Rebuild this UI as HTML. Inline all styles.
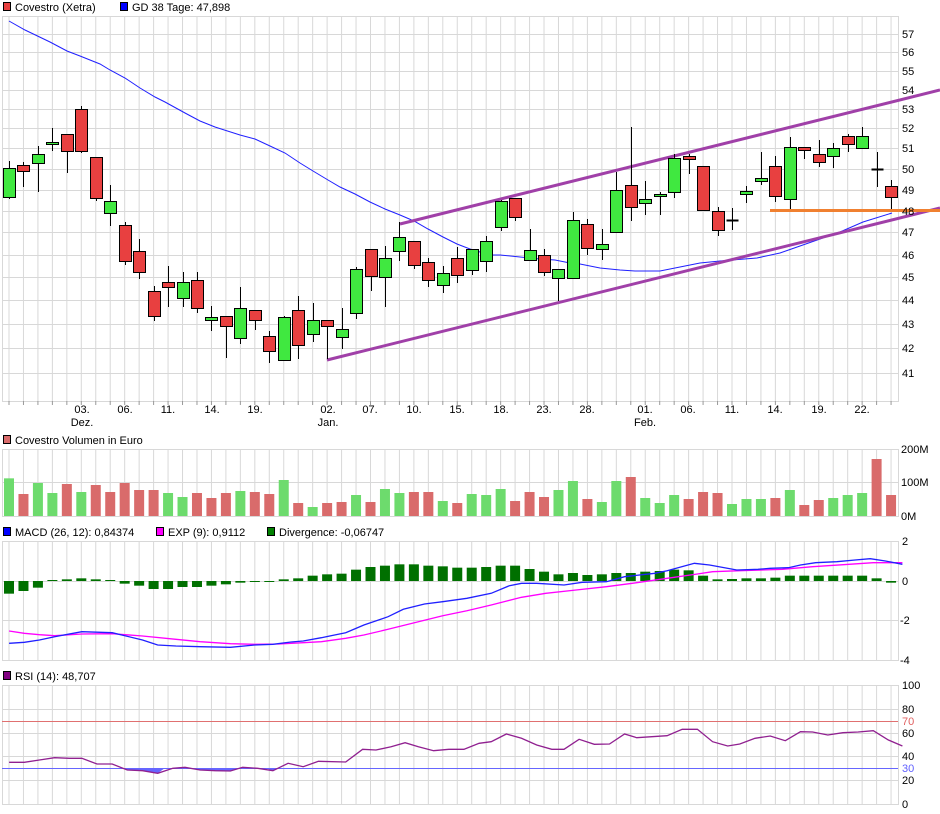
<!DOCTYPE html>
<html><head><meta charset="utf-8"><style>
body{margin:0;background:#fff;width:940px;height:814px;overflow:hidden;font-family:"Liberation Sans",sans-serif}
svg{position:absolute;left:0;top:0}
</style></head><body>
<svg id="s" width="940" height="814" xmlns="http://www.w3.org/2000/svg" font-family="Liberation Sans, sans-serif" font-size="11" fill="#000">
<g id="grid"></g>
<g id="draw"></g>
<!-- legends -->
<rect x="3.5" y="2.5" width="7" height="8" fill="#e84040" stroke="#000"/>
<text x="15" y="11">Covestro (Xetra)</text>
<rect x="120.5" y="2.5" width="7" height="8" fill="#0000ff" stroke="#000"/>
<text x="132" y="11">GD 38 Tage: 47,898</text>
<rect x="3.5" y="435.5" width="7" height="8" fill="#d96b6b" stroke="#000"/>
<text x="15" y="444">Covestro Volumen in Euro</text>
<rect x="3.5" y="527.5" width="7" height="8" fill="#0000ff" stroke="#000"/>
<text x="15" y="536">MACD (26, 12): 0,84374</text>
<rect x="156.5" y="527.5" width="7" height="8" fill="#ff00ff" stroke="#000"/>
<text x="168" y="536">EXP (9): 0,9112</text>
<rect x="267.5" y="527.5" width="7" height="8" fill="#008000" stroke="#000"/>
<text x="279" y="536">Divergence: -0,06747</text>
<rect x="3.5" y="671.5" width="7" height="8" fill="#800080" stroke="#000"/>
<text x="15" y="680">RSI (14): 48,707</text>
<g font-size="11">
<text x="902" y="38">57</text><text x="902" y="56">56</text><text x="902" y="75">55</text><text x="902" y="94">54</text><text x="902" y="113">53</text><text x="902" y="132">52</text><text x="902" y="152">51</text><text x="902" y="173">50</text><text x="902" y="194">49</text><text x="902" y="215">48</text><text x="902" y="236">47</text><text x="902" y="259">46</text><text x="902" y="281">45</text><text x="902" y="304">44</text><text x="902" y="328">43</text><text x="902" y="352">42</text><text x="902" y="377">41</text>
<text x="901" y="453">200M</text><text x="901" y="486">100M</text><text x="901" y="520">0M</text>
<text x="902" y="545">2</text><text x="902" y="585">0</text><text x="900" y="624">-2</text><text x="900" y="664">-4</text>
<text x="902" y="689">100</text><text x="902" y="713">80</text><text x="902" y="725" fill="#e06060">70</text><text x="902" y="737">60</text><text x="902" y="760">40</text><text x="902" y="772" fill="#6060ff">30</text><text x="902" y="784">20</text><text x="902" y="808">0</text>
</g>
<g text-anchor="middle">
<text x="82" y="413">03.</text><text x="125" y="413">06.</text><text x="168" y="413">11.</text><text x="212" y="413">14.</text><text x="255" y="413">19.</text><text x="328" y="413">02.</text><text x="370" y="413">07.</text><text x="414" y="413">10.</text><text x="457" y="413">15.</text><text x="501" y="413">18.</text><text x="544" y="413">23.</text><text x="587" y="413">28.</text><text x="645" y="413">01.</text><text x="688" y="413">06.</text><text x="732" y="413">11.</text><text x="775" y="413">14.</text><text x="819" y="413">19.</text><text x="862" y="413">22.</text>
<text x="82" y="426">Dez.</text><text x="328" y="426">Jan.</text><text x="645" y="426">Feb.</text>
</g>
</svg>
<script>
var NS="http://www.w3.org/2000/svg";
function el(p,t,a){var e=document.createElementNS(NS,t);for(var k in a)e.setAttribute(k,a[k]);p.appendChild(e);return e;}
var G=document.getElementById('grid'),D=document.getElementById('draw');
function X(i){return 9+i*14.46;}
var gc="#d8d8d8";
// panels
var panels=[[16,401],[449,516],[541,660],[685,804]];
panels.forEach(function(p){
 for(var i=0;i<62;i++)el(G,'line',{x1:X(i),x2:X(i),y1:p[0],y2:p[1],stroke:gc});
 el(G,'rect',{x:2.5,y:p[0]+.5,width:896,height:p[1]-p[0],fill:'none',stroke:gc});
});
for(var i=0;i<62;i++)el(G,'line',{x1:X(i),x2:X(i),y1:401,y2:405,stroke:'#999'});
function PY(p){return 34+1028.6*(Math.log(57)-Math.log(p));}
for(var p=41;p<=57;p++){var y=Math.round(PY(p))+.5;el(G,'line',{x1:2,x2:898,y1:y,y2:y,stroke:gc});}
[482.5].forEach(function(y){el(G,'line',{x1:2,x2:898,y1:y,y2:y,stroke:gc});});
[581.5,620.5].forEach(function(y){el(G,'line',{x1:2,x2:898,y1:y,y2:y,stroke:gc});});
[709.5,733.5,756.5,780.5].forEach(function(y){el(G,'line',{x1:2,x2:898,y1:y,y2:y,stroke:gc});});
el(G,'line',{x1:2,x2:898,y1:721.5,y2:721.5,stroke:'#e07070'});
el(G,'line',{x1:2,x2:898,y1:768.5,y2:768.5,stroke:'#6666ff'});
// GD38
var gd=[[9,21],[25,30],[50,42],[67,51],[80,56],[100,64],[110,70],[125,78],[140,88],[155,97],[165,102],[185,113],[200,121],[215,127],[240,135],[255,139],[270,146],[285,153],[300,163],[313,171],[328,180],[340,187],[355,194],[370,202],[385,209],[400,215],[414,221],[428,229],[443,237],[457,244],[470,249],[490,255],[500,255],[520,257],[540,259],[555,260],[570,263],[580,264],[600,268],[620,270],[635,271],[660,271],[680,267],[700,263],[720,261],[732,260],[757,258],[780,254],[800,248],[820,242],[840,236],[863,219],[892,213]];
gd=[[9,21],[25,30],[50,42],[67,51],[80,56],[100,64],[110,70],[125,78],[140,88],[155,97],[165,102],[185,113],[200,121],[215,127],[240,135],[255,139],[270,146],[285,153],[300,163],[313,171],[328,180],[340,187],[355,194],[370,202],[385,209],[400,215],[414,221],[428,229],[443,237],[457,244],[470,249],[490,255],[500,255],[520,257],[540,259],[555,260],[570,263],[580,264],[600,268],[620,270],[635,271],[660,271],[680,267],[700,263],[720,261],[732,260],[757,258],[780,253],[800,246],[820,239],[840,232],[863,222],[892,213]];
el(D,'polyline',{points:gd.join(' '),fill:'none',stroke:'#2020ff','stroke-width':1});
// trend lines
el(D,'line',{x1:400,y1:224,x2:940,y2:90,stroke:'#a040a8','stroke-width':3});
el(D,'line',{x1:327,y1:360,x2:940,y2:208,stroke:'#a040a8','stroke-width':3});
// candles [bt,bb,wt,wb,g]
var c=[[168,197,161,199,1],[165,171,162,187,0],[154,163,146,192,1],[142,144,128,151,1],[134,151,134,173,0],[109,151,106,153,0],[157,198,157,201,0],[201,213,185,226,1],[225,261,222,265,0],[251,272,239,279,0],[291,316,286,321,0],[282,287,266,307,0],[282,298,272,307,1],[280,308,272,313,0],[317,320,306,331,1],[316,326,316,358,0],[308,338,287,344,1],[310,320,310,330,0],[336,351,331,363,0],[317,360,316,360,1],[310,345,296,359,0],[320,334,303,342,1],[320,326,320,359,0],[329,337,308,349,1],[269,313,267,319,1],[249,276,249,291,0],[258,277,246,307,1],[237,251,222,261,1],[241,265,241,269,0],[262,280,258,287,0],[273,285,266,293,1],[258,275,247,283,0],[249,270,249,275,1],[241,261,236,272,1],[201,227,200,231,1],[198,217,198,221,0],[250,260,229,261,1],[255,272,249,276,0],[269,278,269,301,1],[220,278,212,278,1],[224,248,219,255,0],[244,249,229,260,1],[190,232,172,232,1],[185,207,127,221,0],[199,203,181,215,1],[194,196,192,215,1],[158,192,154,198,1],[156,159,154,174,0],[166,210,166,210,0],[211,230,207,236,0],[220,220,208,230,2],[191,194,186,203,1],[178,181,152,185,1],[166,196,156,202,0],[147,199,137,209,1],[147,150,147,159,0],[154,162,140,167,0],[148,156,143,168,1],[136,144,134,152,0],[136,148,127,148,1],[169,169,152,187,2],[186,197,180,209,0]];
c.forEach(function(k,i){var x=Math.round(X(i))+.5;
 el(D,'line',{x1:x,x2:x,y1:k[2],y2:k[3],stroke:'#000'});
 if(k[4]==2){el(D,'line',{x1:x-6,x2:x+6,y1:k[0]+.5,y2:k[0]+.5,stroke:'#000','stroke-width':2});}
 else el(D,'rect',{x:x-6,y:k[0]+.5,width:12,height:Math.max(2,k[1]-k[0]),fill:k[4]?'#40e840':'#e84040',stroke:'#000'});
});
el(D,'line',{x1:770,y1:210.5,x2:940,y2:210.5,stroke:'#f08030','stroke-width':3});
// volume
var v=[[145,1],[192,0],[159,1],[189,1],[162,0],[186,1],[165,0],[186,0],[159,0],[180,0],[180,0],[189,1],[201,1],[189,0],[204,0],[189,0],[183,1],[186,0],[192,0],[150,1],[219,0],[231,1],[219,0],[216,0],[195,1],[216,0],[177,1],[189,1],[186,0],[186,0],[213,1],[219,0],[192,1],[195,1],[177,1],[213,0],[186,0],[201,0],[180,1],[153,1],[207,0],[216,1],[153,1],[141,0],[204,1],[219,1],[195,1],[207,0],[186,0],[189,0],[222,1],[207,1],[207,1],[204,0],[180,1],[225,0],[210,0],[204,1],[195,1],[189,1],[87,0],[195,0]];
v.forEach(function(b,i){var t=430+b[0]/3;el(D,'rect',{x:X(i)-5,y:t,width:10,height:516-t,fill:b[1]?'#6ddb6d':'#d96b6b'});});
// divergence
var dv=[-38,-30,-20,3,5,8,5,3,-8,-14,-24,-24,-18,-18,-14,-10,-5,-2,-2,5,8,16,20,22,34,42,46,50,50,46,44,40,40,42,46,46,36,28,20,24,18,20,24,24,28,30,34,32,16,5,6,8,8,10,16,16,16,16,16,16,8,-5];
dv.forEach(function(d,i){var h=d/3;el(D,'rect',{x:X(i)-5,y:h>0?581-h:581,width:10,height:Math.max(1,Math.abs(h)),fill:'#007000'});});
function cv(a){return a.map(function(p){return (p[0]/1.649).toFixed(1)+','+(430+p[1]/3).toFixed(1);}).join(' ');}
var ex=[[15,603],[40,610],[65,614],[90,617],[135,612],[185,611],[235,618],[290,628],[330,635],[380,641],[420,643],[460,642],[500,638],[530,635],[570,625],[600,615],[640,598],[690,575],[730,557],[770,542],[810,525],[860,502],[900,490],[950,480],[1000,470],[1050,458],[1100,445],[1150,432],[1175,425],[1220,422],[1290,418],[1340,410],[1400,403],[1440,398],[1488,398]];
var mc=[[15,640],[40,637],[65,630],[90,620],[135,605],[185,608],[235,630],[260,645],[290,648],[330,650],[380,652],[420,645],[450,643],[480,636],[500,633],[530,623],[570,608],[600,585],[640,560],[665,538],[700,522],[730,515],[770,505],[810,490],[840,467],[860,460],[885,460],[930,465],[960,457],[1000,455],[1030,440],[1080,430],[1100,422],[1145,400],[1170,405],[1215,420],[1250,418],[1270,415],[1300,413],[1320,405],[1345,398],[1380,395],[1410,390],[1435,386],[1460,393],[1488,403]];
el(D,'polyline',{points:cv(ex),fill:'none',stroke:'#ff00ff','stroke-width':1.3});
el(D,'polyline',{points:cv(mc),fill:'none',stroke:'#2020ff','stroke-width':1.3});
// RSI
var r=[[15,997],[40,997],[65,990],[90,983],[115,985],[135,985],[160,1002],[185,1002],[210,1020],[235,1022],[260,1030],[285,1015],[305,1012],[330,1020],[355,1022],[380,1023],[400,1012],[425,1015],[450,1022],[475,1000],[500,1010],[525,994],[570,996],[598,958],[620,960],[645,950],[668,938],[690,950],[715,962],[740,958],[765,958],[790,940],[810,935],[835,912],[860,925],[885,945],[910,958],[930,958],[955,928],[980,943],[1005,942],[1030,912],[1050,923],[1075,920],[1100,917],[1125,898],[1150,898],[1175,935],[1200,948],[1220,942],[1245,925],[1270,918],[1295,932],[1320,905],[1340,906],[1365,915],[1390,908],[1415,906],[1440,902],[1465,930],[1488,948]];
el(D,'polygon',{points:'124,768 '+cv(r.slice(8,11))+' 165,768',fill:'#6666ff'});
el(D,'polygon',{points:'192,768 '+cv(r.slice(13,16))+' 240,768',fill:'#6666ff'});
el(D,'polygon',{points:'265,768 '+cv(r.slice(18,19))+' 280,768',fill:'#6666ff'});
el(D,'polyline',{points:cv(r),fill:'none',stroke:'#902090','stroke-width':1.3});
</script>
</body></html>
